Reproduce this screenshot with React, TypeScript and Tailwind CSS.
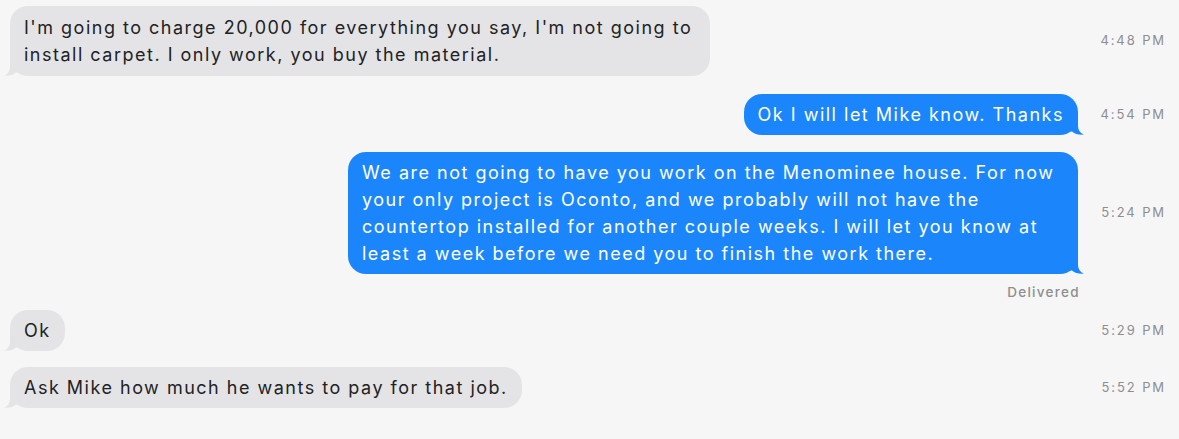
import React from 'react'

type Msg = {
  from: 'them' | 'me'
  lines: string[]
  time: string
  width?: string
  delivered?: boolean
}

const messages: Msg[] = [
  {
    from: 'them',
    lines: [
      "I'm going to charge 20,000 for everything you say, I'm not going to",
      'install carpet. I only work, you buy the material.',
    ],
    time: '4:48 PM',
    width: 'w-[700px] py-[8px]',
  },
  { from: 'me', lines: ['Ok I will let Mike know. Thanks'], time: '4:54 PM' },
  {
    from: 'me',
    lines: [
      'We are not going to have you work on the Menominee house. For now',
      'your only project is Oconto, and we probably will not have the',
      'countertop installed for another couple weeks. I will let you know at',
      'least a week before we need you to finish the work there.',
    ],
    time: '5:24 PM',
    width: 'w-[730px] py-[7px]',
    delivered: true,
  },
  { from: 'them', lines: ['Ok'], time: '5:29 PM' },
  { from: 'them', lines: ['Ask Mike how much he wants to pay for that job.'], time: '5:52 PM' },
]

// spacing above each row, tuned to the screenshot
const gaps = ['', 'mt-[18px]', 'mt-[17px]', 'mt-[10px]', 'mt-[16px]']

function Tail({ mine }: { mine: boolean }) {
  return (
    <svg
      width="16"
      height="18"
      viewBox="0 0 16 18"
      className={
        mine
          ? 'absolute -right-[8px] bottom-0 scale-x-[-1]'
          : 'absolute -left-[8px] bottom-0'
      }
    >
      <path
        d="M8 0 V9 C8 13 6 16 2 17.6 C7 18 11 17 14 14.5 L16 14.5 V0 Z"
        fill={mine ? '#1b86fb' : '#e4e4e6'}
      />
    </svg>
  )
}

function Bubble({ msg }: { msg: Msg }) {
  const mine = msg.from === 'me'
  return (
    <div className="flex items-center">
      <div className={`flex-1 flex flex-col ${mine ? 'items-end pr-[9px]' : 'items-start pl-[10px]'}`}>
        <div
          className={`relative rounded-[18px] px-[14px] text-[18px] leading-[27px] tracking-[1.5px] whitespace-nowrap ${
            msg.width ?? 'py-[7px]'
          } ${mine ? 'bg-[#1b86fb] text-white' : 'bg-[#e4e4e6] text-[#222224]'}`}
        >
          {msg.lines.map((l, i) => (
            <div key={i}>{l}</div>
          ))}
          <Tail mine={mine} />
        </div>
      </div>
      <div className="w-[92px] shrink-0 pr-[13px] text-right text-[13px] tracking-[1.9px] text-[#8e8e90]">
        {msg.time}
      </div>
    </div>
  )
}

export default function App() {
  return (
    <div
      className="w-[1179px] h-[439px] bg-[#f6f6f6] pt-[6px] flex flex-col"
      style={{ fontFamily: 'Inter, "Liberation Sans", Arial, sans-serif' }}
    >
      {messages.map((m, i) => (
        <div key={i} className={gaps[i]}>
          <Bubble msg={m} />
          {m.delivered && (
            <div className="pr-[99px] pt-[10px] text-right text-[13.5px] leading-[16px] font-medium tracking-[1.3px] text-[#8e8e90]">
              Delivered
            </div>
          )}
        </div>
      ))}
    </div>
  )
}
